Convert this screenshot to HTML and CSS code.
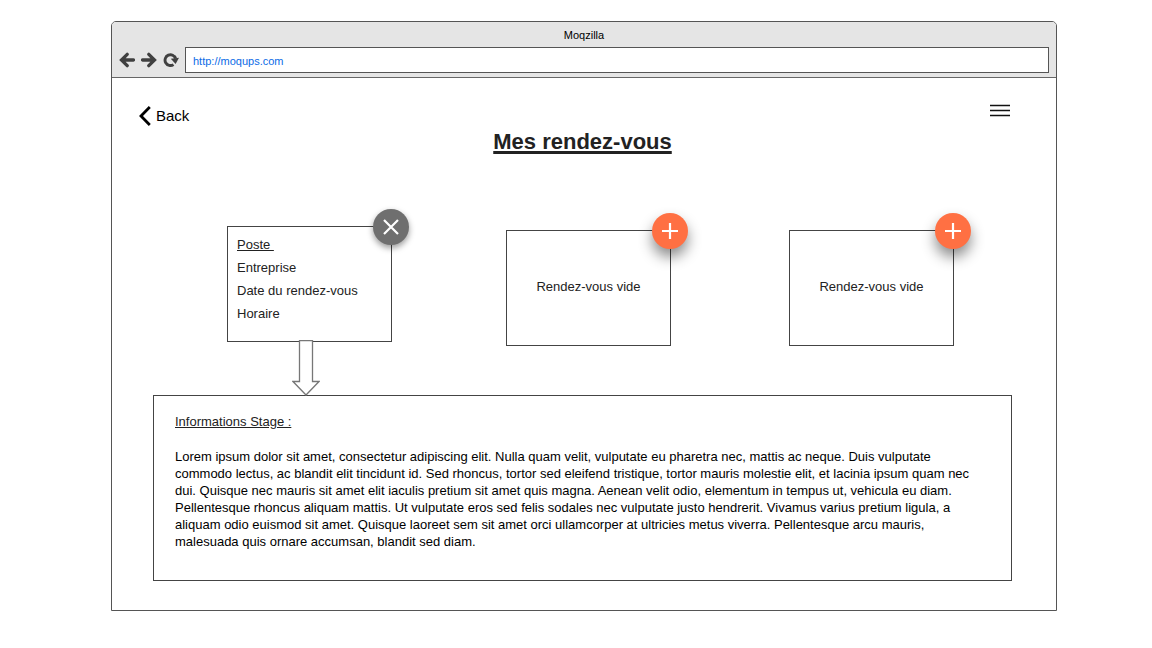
FILE: index.html
```html
<!DOCTYPE html>
<html lang="fr">
<head>
<meta charset="utf-8">
<meta name="viewport" content="width=device-width, initial-scale=1">
<title>Mes rendez-vous</title>
<link rel="stylesheet" href="styles.css">
</head>
<body>
<div class="browser">
  <header class="chrome">
    <div class="chrome-title">Moqzilla</div>
    <form class="toolbar">
      <button type="button" class="tool" aria-label="Previous page">
        <svg viewBox="0 0 16 16" width="16" height="16"><path d="M14.500 8H3.500M8.200 2.300L2.500 8l5.700 5.700" fill="none" stroke="#404040" stroke-width="3.300" stroke-linecap="round"/></svg>
      </button>
      <button type="button" class="tool" aria-label="Next page">
        <svg viewBox="0 0 16 16" width="16" height="16"><path d="M1.500 8h11M7.800 2.300L13.500 8l-5.700 5.700" fill="none" stroke="#404040" stroke-width="3.300" stroke-linecap="round"/></svg>
      </button>
      <button type="button" class="tool" aria-label="Reload">
        <svg viewBox="0 0 16 16" width="16" height="16"><path d="M10.500 12.600A5.400 5.400 0 1 1 12.600 6.500" fill="none" stroke="#404040" stroke-width="2.900"/><path d="M7.800 6.800L16 5.800 12.600 12z" fill="#404040"/></svg>
      </button>
      <input class="address" type="text" aria-label="Address" value="http://moqups.com">
    </form>
  </header>

  <main class="page">
    <nav class="topbar">
      <a class="back" href="#">
        <svg viewBox="0 0 12 20" width="12" height="20"><path d="M10.800 1L2 10l8.800 9" fill="none" stroke="#000" stroke-width="2.800"/></svg>
        <span>Back</span>
      </a>
      <button type="button" class="menu" aria-label="Menu">
        <svg viewBox="0 0 20 14" width="20" height="14"><path d="M0 1.500h20M0 6.500h20M0 11.500h20" stroke="#111" stroke-width="1.400"/></svg>
      </button>
    </nav>

    <h1 class="heading">Mes rendez-vous</h1>

    <div class="slots">
      <div class="slot">
        <section class="card">
          <ul class="details">
            <li class="underlined">Poste&nbsp;</li>
            <li>Entreprise</li>
            <li>Date du rendez-vous</li>
            <li>Horaire</li>
          </ul>
          <button type="button" class="round remove" aria-label="Supprimer">
            <svg viewBox="0 0 18 18" width="18" height="18"><path d="M2 2l14 14M16 2L2 16" stroke="#fff" stroke-width="2.200"/></svg>
          </button>
        </section>
        <svg class="arrow" viewBox="0 0 28 56" width="28" height="56"><path d="M7.500.500h13v41h6.500L14 55 1 41.500h6.500z" fill="#fff" stroke="#777" stroke-width="1.300"/></svg>
      </div>
      <section class="card empty">
        <p>Rendez-vous vide</p>
        <button type="button" class="round add" aria-label="Ajouter">
          <svg viewBox="0 0 18 18" width="18" height="18"><path d="M9 1v16M1 9h16" stroke="#fff" stroke-width="2.200"/></svg>
        </button>
      </section>
      <section class="card empty">
        <p>Rendez-vous vide</p>
        <button type="button" class="round add" aria-label="Ajouter">
          <svg viewBox="0 0 18 18" width="18" height="18"><path d="M9 1v16M1 9h16" stroke="#fff" stroke-width="2.200"/></svg>
        </button>
      </section>
    </div>

    <section class="info">
      <h2 class="underlined">Informations Stage :</h2>
      <p>Lorem ipsum dolor sit amet, consectetur adipiscing elit. Nulla quam velit, vulputate eu pharetra nec, mattis ac neque. Duis vulputate commodo lectus, ac blandit elit tincidunt id. Sed rhoncus, tortor sed eleifend tristique, tortor mauris molestie elit, et lacinia ipsum quam nec dui. Quisque nec mauris sit amet elit iaculis pretium sit amet quis magna. Aenean velit odio, elementum in tempus ut, vehicula eu diam. Pellentesque rhoncus aliquam mattis. Ut vulputate eros sed felis sodales nec vulputate justo hendrerit. Vivamus varius pretium ligula, a aliquam odio euismod sit amet. Quisque laoreet sem sit amet orci ullamcorper at ultricies metus viverra. Pellentesque arcu mauris, malesuada quis ornare accumsan, blandit sed diam.</p>
    </section>
  </main>
</div>
</body>
</html>
```

FILE: styles.css
```css
* {
  box-sizing: border-box;
}

body {
  margin: 0;
  padding: 21px 95px 37px 111px;
  background: #fff;
  color: #222;
  font: 13px/17px "Liberation Sans", Arial, sans-serif;
}

h1, h2, p, ul {
  margin: 0;
  padding: 0;
  font-size: inherit;
  font-weight: normal;
}

button {
  display: grid;
  place-items: center;
  padding: 0;
  border: 0;
  background: none;
  cursor: pointer;
}

svg {
  display: block;
}

.browser {
  border: 1px solid #555;
  border-radius: 5px 5px 0 0;
}

.chrome {
  padding: 5px 7px 4px;
  border-bottom: 1px solid #666;
  border-radius: 4px 4px 0 0;
  background: #e5e5e5;
}

.chrome-title {
  color: #000;
  font-size: 11px;
  text-align: center;
}

.toolbar {
  display: flex;
  align-items: center;
  gap: 6px;
  margin-top: 3px;
}

.tool {
  width: 16px;
  height: 16px;
}

.address {
  flex: 1;
  min-width: 0;
  height: 26px;
  padding: 1px 7px 0;
  border: 1px solid #555;
  background: #fff;
  color: #0b6be6;
  font: 11px "Liberation Sans", Arial, sans-serif;
}

.page {
  padding: 26px 44px 29px 41px;
}

.topbar {
  display: flex;
  align-items: flex-start;
  justify-content: space-between;
  margin: 0 2px 0 -14px;
}

.back {
  display: flex;
  align-items: center;
  gap: 5px;
  padding-top: 1px;
  color: #000;
  font-size: 15px;
  line-height: 22px;
  text-decoration: none;
}

.heading {
  margin-top: 1px;
  font-size: 22px;
  font-weight: bold;
  line-height: 28px;
  text-align: center;
  text-decoration: underline;
  text-decoration-thickness: 3px;
  text-decoration-skip-ink: none;
}

.slots {
  display: grid;
  grid-template-columns: 279fr 283fr 165fr;
  margin: 70px 58px 0 74px;
}

.card {
  position: relative;
  width: 165px;
  min-height: 116px;
  border: 1px solid #444;
}

.empty {
  display: grid;
  place-items: center;
  align-self: start;
  margin-top: 4px;
  padding-bottom: 3px;
}

.details {
  padding: 6px 9px;
  line-height: 23px;
  list-style: none;
}

.underlined {
  text-decoration: underline;
}

.round {
  position: absolute;
  top: -18px;
  right: -18px;
  width: 36px;
  height: 36px;
  border-radius: 50%;
}

.remove {
  background: #6f6f6f;
  box-shadow: 0 3px 6px rgba(0, 0, 0, 0.4);
}

.add {
  background: #ff7043;
  box-shadow: 0 8px 14px rgba(0, 0, 0, 0.45);
}

.arrow {
  position: relative;
  margin: -2px 0 -1px 65px;
}

.info {
  padding: 17px 25px 30px 21px;
  border: 1px solid #444;
}

.info p {
  margin-top: 18px;
  color: #000;
}
```
